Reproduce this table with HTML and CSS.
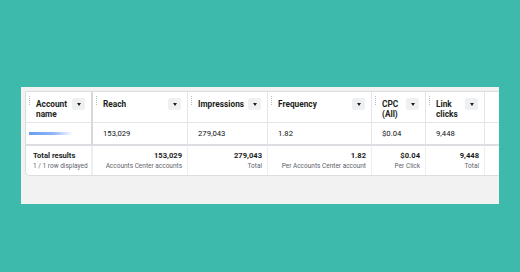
FILE: index.html
```html
<!DOCTYPE html>
<html>
<head>
<meta charset="utf-8">
<link rel="stylesheet" href="styles.css">
</head>
<body>
<div class="panel">
  <div class="card">
    <div class="grid">
      <div class="hcell frozen"><span class="grip"></span><span class="htxt">Account<br>name</span><span class="dd"></span></div>
      <div class="hcell"><span class="grip"></span><span class="htxt">Reach</span><span class="dd"></span></div>
      <div class="hcell"><span class="grip"></span><span class="htxt">Impressions</span><span class="dd"></span></div>
      <div class="hcell"><span class="grip"></span><span class="htxt">Frequency</span><span class="dd"></span></div>
      <div class="hcell"><span class="grip"></span><span class="htxt">CPC<br>(All)</span><span class="dd"></span></div>
      <div class="hcell"><span class="grip"></span><span class="htxt">Link<br>clicks</span><span class="dd"></span></div>
      <div class="hcell last"></div>

      <div class="dcell frozen"><span class="blur"></span></div>
      <div class="dcell">153,029</div>
      <div class="dcell">279,043</div>
      <div class="dcell">1.82</div>
      <div class="dcell">$0.04</div>
      <div class="dcell">9,448</div>
      <div class="dcell last"></div>

      <div class="tcell frozen first"><span class="tval">Total results</span><span class="tsub">1 / 1 row displayed</span></div>
      <div class="tcell"><span class="tval">153,029</span><span class="tsub">Accounts Center accounts</span></div>
      <div class="tcell"><span class="tval">279,043</span><span class="tsub">Total</span></div>
      <div class="tcell"><span class="tval">1.82</span><span class="tsub">Per Accounts Center account</span></div>
      <div class="tcell"><span class="tval">$0.04</span><span class="tsub">Per Click</span></div>
      <div class="tcell"><span class="tval">9,448</span><span class="tsub">Total</span></div>
      <div class="tcell last"></div>
    </div>
  </div>
</div>
</body>
</html>
```
FILE: styles.css
```css
html, body {
  margin: 0;
  padding: 0;
}
body {
  background: #3dbaab;
  width: 520px;
  height: 272px;
  overflow: hidden;
  font-family: Roboto, "Liberation Sans", Arial, sans-serif;
  color: #1c1e21;
}
.panel {
  margin: 87px 0 0 21px;
  width: 478px;
  height: 117px;
  background: #f2f2f2;
  padding: 4px 0 0 4px;
  box-sizing: border-box;
  overflow: hidden;
}
.card {
  background: #fff;
  border: 1px solid #dcdde0;
  border-right: none;
  border-radius: 0 0 0 5px;
  width: 520px;
  box-sizing: border-box;
}
.grid {
  display: grid;
  grid-template-columns: 67px 95px 80px 104px 54px 59px 61px;
  grid-template-rows: 31px 23px 29px;
}
.hcell, .dcell, .tcell {
  position: relative;
  border-right: 1px solid #e4e5e8;
  box-sizing: border-box;
  overflow: hidden;
}
.frozen {
  border-right: 2px solid #d7d8db;
}
.hcell {
  border-bottom: 1px solid #e4e5e8;
  padding: 8px 0 0 10px;
}
.htxt {
  display: block;
  font-size: 8.3px;
  font-weight: 700;
  line-height: 9.5px;
  color: #1c1e21;
}
.grip {
  position: absolute;
  left: 3px;
  top: 4px;
  width: 1px;
  height: 9px;
  background: repeating-linear-gradient(to bottom, #b8bbc0 0 1px, transparent 1px 2px);
}
.dd {
  position: absolute;
  right: 6px;
  top: 6px;
  width: 13px;
  height: 12px;
  background: #eff0f2;
  border-radius: 2px;
}
.dd::after {
  content: "";
  position: absolute;
  left: 4.5px;
  top: 5px;
  border-left: 2.5px solid transparent;
  border-right: 2.5px solid transparent;
  border-top: 3px solid #1c1e21;
}
.dcell {
  border-bottom: 2px solid #dcdde0;
  padding-left: 10px;
  font-size: 7.7px;
  line-height: 22px;
  color: #111316;
}
.blur {
  position: absolute;
  left: 3px;
  top: 9px;
  width: 44px;
  height: 3px;
  background: linear-gradient(90deg, #6a9cf2 0%, #8fb5f7 55%, rgba(170, 200, 250, 0) 100%);
  filter: blur(0.7px);
}
.tcell {
  display: flex;
  flex-direction: column;
  align-items: flex-end;
  padding: 5px 5px 0 0;
  border-right-color: #eeeff1;
}
.tcell.first {
  align-items: flex-start;
  padding-left: 7px;
}
.tval {
  font-size: 7.6px;
  font-weight: 700;
  line-height: 10px;
  white-space: nowrap;
}
.tsub {
  font-size: 6.5px;
  line-height: 10px;
  color: #60646b;
  white-space: nowrap;
}
.last {
  border-right: none;
}
```
